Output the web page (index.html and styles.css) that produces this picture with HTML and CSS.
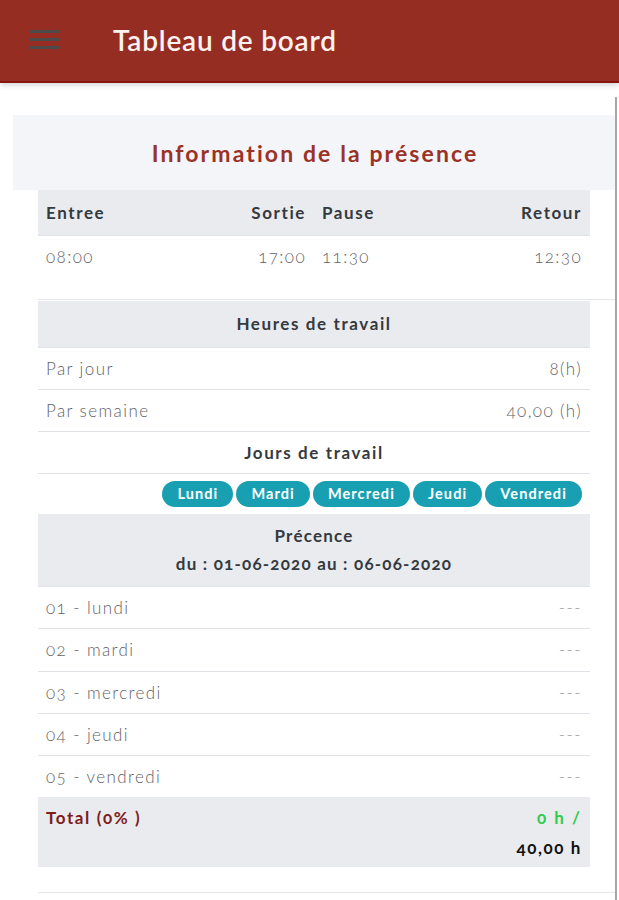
FILE: index.html
```html
<!DOCTYPE html>
<html lang="fr">
<head>
<meta charset="utf-8">
<title>Tableau de board</title>
<link rel="stylesheet" href="styles.css">
</head>
<body>
<header class="topbar">
  <span class="burger" aria-label="menu">
    <svg width="29" height="20" viewBox="0 0 29 20"><rect x="0" y="0" width="29" height="3" fill="#4d4a4a"/><rect x="0" y="8" width="29" height="3" fill="#4d4a4a"/><rect x="0" y="16" width="29" height="3" fill="#4d4a4a"/></svg>
  </span>
  <h1 class="topbar-title">Tableau de board</h1>
</header>
<main class="page">
  <div class="card-head"><h2 class="card-title">Information de la présence</h2></div>
  <div class="card-body">
    <section class="block block-first">
      <table class="tbl">
        <thead>
          <tr class="head"><th class="l">Entree</th><th class="r">Sortie</th><th class="l">Pause</th><th class="r">Retour</th></tr>
        </thead>
        <tbody>
          <tr><td class="l">08:00</td><td class="r">17:00</td><td class="l">11:30</td><td class="r">12:30</td></tr>
        </tbody>
      </table>
    </section>
    <section class="block">
      <table class="tbl">
        <tr class="head"><th colspan="2" class="c">Heures de travail</th></tr>
        <tr><td class="l">Par jour</td><td class="r">8(h)</td></tr>
        <tr><td class="l">Par semaine</td><td class="r">40,00 (h)</td></tr>
        <tr><th colspan="2" class="c plain">Jours de travail</th></tr>
        <tr><td colspan="2" class="r badges">
          <span class="badge">Lundi</span><span class="badge">Mardi</span><span class="badge">Mercredi</span><span class="badge">Jeudi</span><span class="badge">Vendredi</span>
        </td></tr>
        <tr class="head"><th colspan="2" class="c two">Précence<br>du : 01-06-2020 au : 06-06-2020</th></tr>
        <tr><td class="l">01 - lundi</td><td class="r dash">---</td></tr>
        <tr><td class="l">02 - mardi</td><td class="r dash">---</td></tr>
        <tr><td class="l">03 - mercredi</td><td class="r dash">---</td></tr>
        <tr><td class="l">04 - jeudi</td><td class="r dash">---</td></tr>
        <tr><td class="l">05 - vendredi</td><td class="r dash">---</td></tr>
        <tr class="head total"><th class="l tot-label">Total (0% )</th><th class="r tot-val"><span class="green">0 h /</span><br><span class="black">40,00 h</span></th></tr>
      </table>
    </section>
    <div class="block block-end"></div>
  </div>
</main>
</body>
</html>
```

FILE: styles.css
```css
html, body {
  margin: 0;
  padding: 0;
  background: #ffffff;
  font-family: "Lato", "Open Sans", sans-serif;
  font-variant-numeric: oldstyle-nums;
  color: #555;
}

.topbar {
  height: 81px;
  background: #952d22;
  border-bottom: 2px solid #86150f;
  box-shadow: 0 2px 6px rgba(0,0,0,0.18);
  display: flex;
  align-items: flex-start;
}

.burger {
  display: block;
  margin: 30px 0 0 30px;
  width: 29px;
  height: 20px;
  line-height: 0;
}

.topbar-title {
  margin: 24px 0 0 54px;
  font-size: 28px;
  font-weight: 600;
  color: #fdf2f0;
  line-height: 32px;
  letter-spacing: 0.8px;
}

.page {
  margin: 14px 2px 0 13px;
  padding-top: 18px;
  border-right: 2px solid #a6a6a6;
  min-height: 820px;
}

.card-head {
  background: #f3f5f8;
  height: 75px;
  display: flex;
  align-items: center;
  justify-content: center;
}

.card-title {
  margin: 0;
  font-size: 23px;
  font-weight: 700;
  color: #9b3226;
  letter-spacing: 2.1px;
  padding-left: 2px;
}

.card-body {
  margin-left: 25px;
}

.block {
  border-top: 1px solid #e4e6e9;
  padding-top: 1px;
}

.block-first {
  border-top: none;
  padding-top: 0;
  padding-bottom: 22px;
}

.block-end {
  margin-top: 25px;
}

.tbl {
  width: 552px;
  border-collapse: collapse;
  table-layout: fixed;
}

.tbl th, .tbl td {
  padding: 9px 8px;
  line-height: 23.2px;
  font-size: 17px;
  border-top: 1px solid #dfe2e6;
}

.tbl th {
  font-weight: 700;
  color: #343a40;
  letter-spacing: 1.6px;
}

.tbl td {
  font-weight: 300;
  color: #5f6266;
  letter-spacing: 1.4px;
}

.tbl .head th {
  background: #e9ebee;
  border-top: none;
  padding-top: 11px;
  padding-bottom: 11px;
}

.l { text-align: left; }
.r { text-align: right; }
.c { text-align: center; }

.tbl th.plain {
  background: transparent;
}

.tbl .head th.two {
  padding-top: 8px;
  padding-bottom: 8px;
  line-height: 28px;
  letter-spacing: 1.2px;
}

.tbl td.badges {
  padding: 7px 8px 7px;
  line-height: 0;
  font-size: 0;
}

.badge {
  display: inline-block;
  background: #199fb2;
  color: #fff;
  font-size: 14.5px;
  font-weight: 700;
  line-height: 26px;
  height: 26px;
  padding: 0 15px;
  border-radius: 13px;
  margin-left: 3px;
  letter-spacing: 1.1px;
}

.tbl td.dash {
  color: #9a9a9a;
  letter-spacing: 1.5px;
}

.tbl .total th {
  padding-top: 6px;
  padding-bottom: 4px;
  line-height: 30px;
  vertical-align: top;
}

.tot-label {
  color: #7d1c1c !important;
}

.green {
  color: #2fcc4f;
  letter-spacing: 2px;
}

.black {
  color: #111;
}
```
